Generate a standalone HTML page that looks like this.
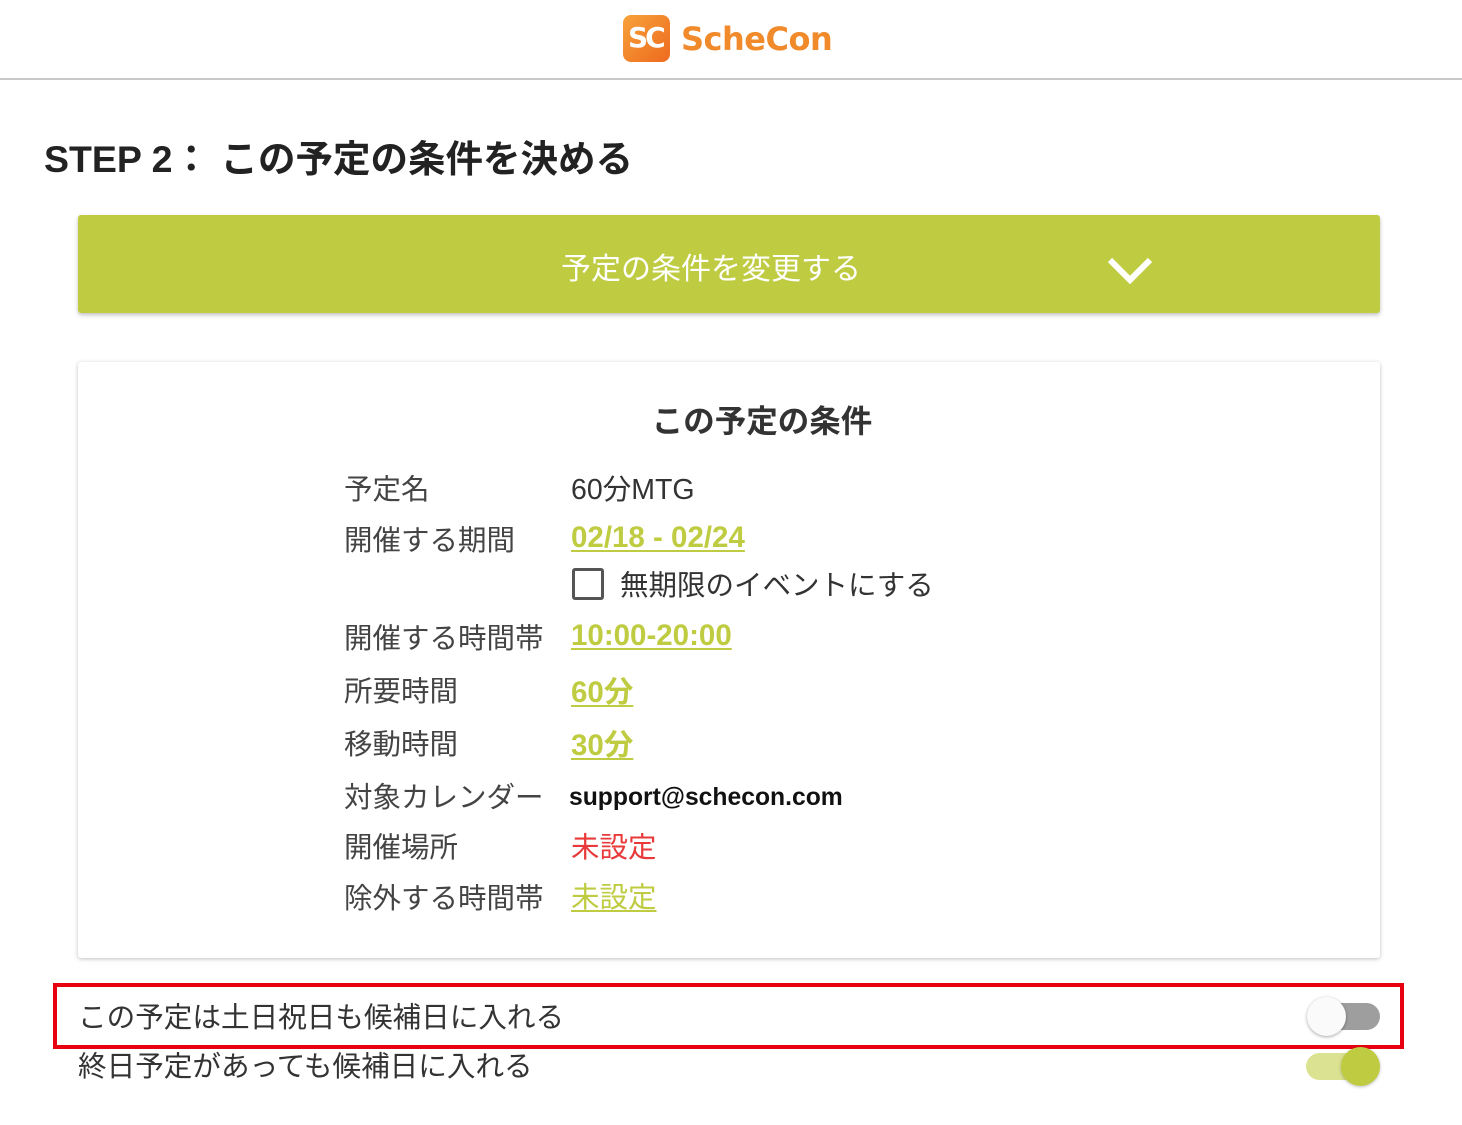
<!DOCTYPE html>
<html><head><meta charset="utf-8"><style>
*{margin:0;padding:0;box-sizing:border-box}
body{width:1462px;height:1125px;background:#fff;font-family:"Liberation Sans","Noto Sans CJK JP",sans-serif;color:#333;position:relative;overflow:hidden}
.abs{position:absolute}
.hdr{left:0;top:0;width:1462px;height:80px;border-bottom:2px solid #c8c8c8}
.logo{left:623px;top:15px;width:47px;height:47px;border-radius:8px;background:linear-gradient(135deg,#f7a23a,#ee6a1e)}
.logotxt{left:681px;top:20px;font-size:32px;font-weight:bold;color:#f08a2a;letter-spacing:-0.5px;font-family:"DejaVu Sans","Liberation Sans",sans-serif}
.title{left:44px;top:128px;font-size:37.5px;font-weight:bold;color:#222}
.bar{left:78px;top:215px;width:1302px;height:98px;background:#bfcc42;border-radius:3px;box-shadow:0 2px 4px rgba(0,0,0,.25)}
.bartxt{left:0;width:1422px;top:244px;text-align:center;font-size:30px;color:#fff}
.card{left:78px;top:362px;width:1302px;height:596px;background:#fff;border-radius:3px;box-shadow:0 1px 4px rgba(0,0,0,.25)}
.ct{left:0;width:1524px;top:396px;text-align:center;font-size:31.5px;font-weight:bold;color:#333}
.lbl{left:344px;font-size:28.5px;color:#444}
.val{left:571px;font-size:28.5px;color:#333}
.lnk{color:#bfcc42;text-decoration:underline;text-underline-offset:3px;font-size:29.5px}
.red{color:#e83a3a}
.row{left:78px;font-size:28.6px;color:#333}
</style></head><body>
<div class="abs hdr"></div>
<div class="abs logo"><span style="position:absolute;left:5px;top:6px;font-size:28px;font-weight:bold;color:#fff;font-family:'DejaVu Sans',sans-serif;letter-spacing:-3px">SC</span></div>
<div class="abs logotxt">ScheCon</div>
<div class="abs title">STEP 2： この予定の条件を決める</div>
<div class="abs bar"></div>
<div class="abs bartxt">予定の条件を変更する</div>
<svg class="abs" style="left:1106px;top:254px" width="48" height="32"><path d="M4 6 L24 26 L44 6" stroke="#fff" stroke-width="6" fill="none"/></svg>
<div class="abs card"></div>
<div class="abs ct">この予定の条件</div>
<div class="abs lbl" style="top:467px">予定名</div><div class="abs val" style="top:467px">60分MTG</div>
<div class="abs lbl" style="top:518px">開催する期間</div><div class="abs val lnk" style="top:521px;font-weight:bold">02/18 - 02/24</div>
<div class="abs" style="left:572px;top:568px;width:32px;height:32px;border:3px solid #555;border-radius:3px"></div>
<div class="abs val" style="left:620px;top:563px">無期限のイベントにする</div>
<div class="abs lbl" style="top:616px">開催する時間帯</div><div class="abs val lnk" style="top:619px;font-weight:bold">10:00-20:00</div>
<div class="abs lbl" style="top:669px">所要時間</div><div class="abs val lnk" style="top:669px;font-weight:bold">60分</div>
<div class="abs lbl" style="top:722px">移動時間</div><div class="abs val lnk" style="top:722px;font-weight:bold">30分</div>
<div class="abs lbl" style="top:775px">対象カレンダー</div><div class="abs val" style="left:569px;top:784px;font-size:24.7px;font-weight:bold;color:#111">support@schecon.com</div>
<div class="abs lbl" style="top:825px">開催場所</div><div class="abs val red" style="top:825px">未設定</div>
<div class="abs lbl" style="top:876px">除外する時間帯</div><div class="abs val lnk" style="top:875px;font-size:28.5px">未設定</div>
<div class="abs" style="left:53px;top:983px;width:1351px;height:66px;border:4px solid #e60012"></div>
<div class="abs row" style="top:995px">この予定は土日祝日も候補日に入れる</div>
<div class="abs row" style="top:1044px">終日予定があっても候補日に入れる</div>
<div class="abs" style="left:1308px;top:1003px;width:72px;height:27px;border-radius:14px;background:#9e9e9e"></div>
<div class="abs" style="left:1307px;top:997px;width:39px;height:39px;border-radius:50%;background:#fafafa;box-shadow:0 1px 3px rgba(0,0,0,.35)"></div>
<div class="abs" style="left:1306px;top:1053px;width:72px;height:27px;border-radius:14px;background:#dbe392"></div>
<div class="abs" style="left:1341px;top:1047px;width:39px;height:39px;border-radius:50%;background:#bfcc42;box-shadow:0 1px 3px rgba(0,0,0,.25)"></div>
</body></html>
